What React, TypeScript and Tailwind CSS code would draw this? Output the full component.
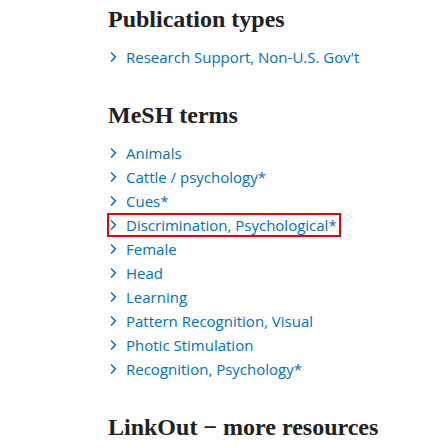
import React from "react";

const Chevron = () => (
  <svg width="7" height="12" viewBox="0 0 7 12" className="shrink-0" fill="none">
    <path d="M1 1.5 L5.5 6 L1 10.5" stroke="#0071bc" strokeWidth="1.5" />
  </svg>
);

const Item = ({ text, boxed }: { text: string; boxed?: boolean }) => (
  <li className="h-6 flex items-center">
    <a
      className={
        "flex items-center gap-[9px] h-[22px] pl-[2px] pr-[3px] text-[#0071bc] " +
        (boxed ? "outline-2 outline-[#e00] -outline-offset-1" : "")
      }
    >
      <Chevron />
      <span>{text}</span>
    </a>
  </li>
);

const mesh = [
  "Animals",
  "Cattle / psychology*",
  "Cues*",
  "Discrimination, Psychological*",
  "Female",
  "Head",
  "Learning",
  "Pattern Recognition, Visual",
  "Photic Stimulation",
  "Recognition, Psychology*",
];

const serif = { fontFamily: '"Liberation Serif", serif' };

export default function App() {
  return (
    <div className="w-[448px] h-[448px] bg-white overflow-hidden pl-[108px]" style={{ fontFamily: '"Open Sans", sans-serif' }}>
      <h2 className="text-[24px] font-bold text-[#212121] pt-[4px] leading-[30px]" style={serif}>
        Publication types
      </h2>
      <ul className="mt-[11px] text-[15px]">
        <Item text="Research Support, Non-U.S. Gov't" />
      </ul>
      <h2 className="text-[24px] font-bold text-[#212121] mt-[31px] leading-[30px]" style={serif}>
        MeSH terms
      </h2>
      <ul className="mt-[11px] text-[15px]">
        {mesh.map((m, i) => (
          <Item key={m} text={m} boxed={i === 3} />
        ))}
      </ul>
      <h2 className="text-[24px] font-bold text-[#212121] mt-[31px] leading-[30px]" style={serif}>
        LinkOut − more resources
      </h2>
    </div>
  );
}
